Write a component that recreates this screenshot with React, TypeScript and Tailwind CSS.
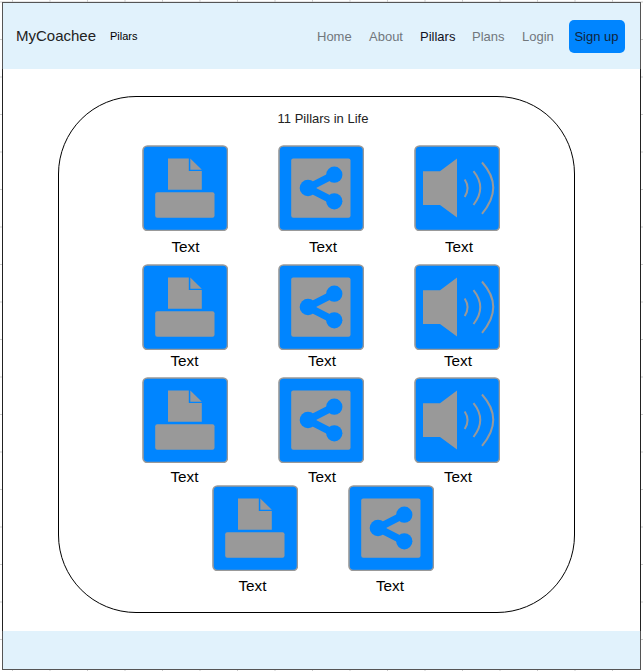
import React from "react";

type IconName = "print" | "share" | "sound";

function PillarIcon({ name }: { name: IconName }) {
  return (
    <svg viewBox="0 0 86 86" className="block h-[86px] w-[86px] shrink-0" aria-hidden="true">
      <rect x="1" y="1" width="84.5" height="84.5" rx="4.5" fill="#0085ff" stroke="#999999" strokeWidth="1.6" />
      {name === "print" && (
        <g fill="#999999">
          <path d="M26 13.5H46.8V26H59.8V44.8H26Z" />
          <path d="M48.3 13.5L59.8 24.7H48.3Z" />
          <rect x="13.2" y="47.2" width="59.3" height="25.5" rx="2" />
        </g>
      )}
      {name === "share" && (
        <g>
          <rect x="13.2" y="13.5" width="59.3" height="59.3" rx="2" fill="#999999" />
          <path d="M56.3 29.5L30 43L56.3 56.5" fill="none" stroke="#0085ff" strokeWidth="7.5" />
          <circle cx="56.3" cy="29.7" r="8.1" fill="#0085ff" />
          <circle cx="30" cy="43" r="8.3" fill="#0085ff" />
          <circle cx="56.3" cy="56.3" r="8.1" fill="#0085ff" />
        </g>
      )}
      {name === "sound" && (
        <g>
          <path d="M9 26.2H26L43 13.5V72.5L26 60H9Z" fill="#999999" />
          <g fill="none" stroke="#999999" strokeWidth="2">
            <path d="M50.7 34.5Q56.5 43.3 50.7 52" />
            <path d="M59.5 26.2Q73 43 59.5 60" />
            <path d="M68 17.5Q90.5 42.5 68 68.8" />
          </g>
        </g>
      )}
    </svg>
  );
}

const icons: IconName[] = ["print", "share", "sound"];

const rows = [
  { icons, row: "h-[119px] pl-[9px]", text: "pt-1 pl-px" },
  { icons, row: "h-[112.5px] pl-[9px]", text: "-mt-px pr-px" },
  { icons, row: "h-[108px] pl-[9px]", text: "pt-0.5 pr-px" },
  { icons: icons.slice(0, 2), row: "h-[120px] pl-[13px]", text: "pt-[3px] pr-[5px]" },
];

export default function App() {
  return (
    <div className="h-[671px] w-[643px] overflow-hidden bg-white bg-[linear-gradient(to_right,#cccccc_1px,transparent_1px),linear-gradient(to_bottom,#cccccc_1px,transparent_1px)] bg-[size:37.5px_37.5px] bg-[position:12px_1.5px] pt-0.5 pl-0.5 font-['Liberation_Sans',Arial,sans-serif] text-black">
      <div className="flex h-[668px] w-[639px] flex-col border border-[#555555] bg-white">
        <header className="flex h-[66px] shrink-0 items-center bg-[#e1f2fc] pl-[13px]">
          <span className="w-[94px] text-[15px] text-[#222222]">MyCoachee</span>
          <span className="w-[207px] text-[11px]">Pilars</span>
          <nav className="flex items-center pt-px text-[13px] text-[#71777c]">
            <a className="w-[52px]">Home</a>
            <a className="w-[51px]">About</a>
            <a className="w-[52px] text-[#111122]">Pillars</a>
            <a className="w-[50px]">Plans</a>
            <a className="w-[47px]">Login</a>
          </nav>
          <button className="flex h-[33px] w-14 items-center justify-center rounded-[5px] bg-[#0085ff] pt-0.5 pr-px text-[13px] text-[#11243a]">
            Sign up
          </button>
        </header>
        <main className="-mx-px flex h-[562px] shrink-0 flex-col border-r-[1.5px] border-l-[1.5px] border-[#222222] pt-[27px] pl-[55px]">
          <section className="h-[517px] w-[517px] rounded-[78px] border-[1.4px] border-black">
            <h1 className="mt-[14px] pl-[13px] text-center text-[13px] leading-[15px] text-[#222222]">11 Pillars in Life</h1>
            <div className="mt-[19px]">
              {rows.map((row, index) => (
                <div key={index} className={`flex justify-center gap-[50px] ${row.row}`}>
                  {row.icons.map((icon, column) => (
                    <figure key={icon} className="w-[86px]">
                      <PillarIcon name={icon} />
                      <figcaption className={`text-center text-[15.3px] leading-6 ${row.text} ${column > 0 ? "translate-x-[1.5px]" : ""}`}>
                        Text
                      </figcaption>
                    </figure>
                  ))}
                </div>
              ))}
            </div>
          </section>
        </main>
        <footer className="flex-1 bg-[#e1f2fc]" />
      </div>
    </div>
  );
}
